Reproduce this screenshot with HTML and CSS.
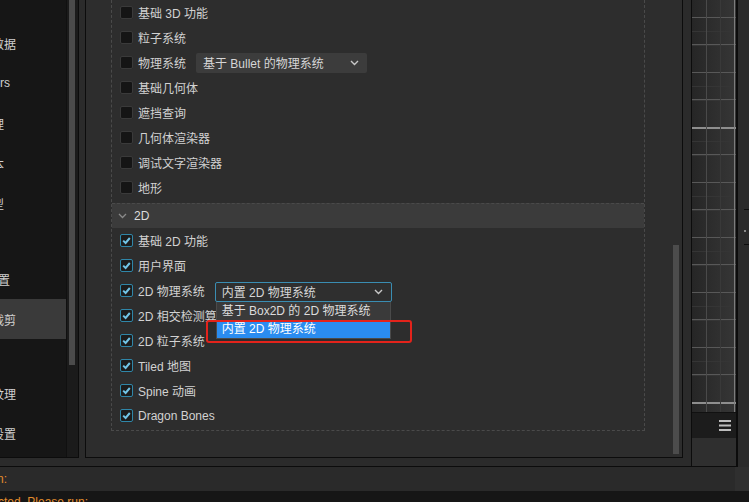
FILE: index.html
```html
<!DOCTYPE html>
<html lang="zh-CN">
<head>
  <meta charset="UTF-8" />
  <meta name="viewport" content="width=device-width, initial-scale=1.0"/>
  <title>项目设置</title>
  <link rel="stylesheet" href="styles.css">
</head>
<body>
  <div class="top">
    <div class="window">
      <div class="sidebar">
        <ul class="nav">
          <li class="nav-item"><span class="nav-label">项目数据</span></li>
          <li class="nav-item"><span class="nav-label end-10">Layers</span></li>
          <li class="nav-item"><span class="nav-label end-4">物理</span></li>
          <li class="nav-item"><span class="nav-label end-4">脚本</span></li>
          <li class="nav-item"><span class="nav-label end-4">模型</span></li>
          <li class="nav-gap"></li>
          <li class="nav-item"><span class="nav-label end-10">宏配置</span></li>
          <li class="nav-item active"><span class="nav-label">功能裁剪</span></li>
          <li class="nav-gap short"></li>
          <li class="nav-item"><span class="nav-label">压缩纹理</span></li>
          <li class="nav-item"><span class="nav-label">构建设置</span></li>
        </ul>
        <div class="nav-scroll"><div class="nav-thumb"></div></div>
      </div>

      <div class="gap"></div>

      <div class="inspector">
        <div class="inspector-body">
          <div class="tree">
            <div class="group group-3d">
              <div class="row"><span class="check"></span>基础 3D 功能</div>
              <div class="row"><span class="check"></span>粒子系统</div>
              <div class="row">
                <span class="check"></span>物理系统
                <div class="select select-3d">
                  <span>基于 Bullet 的物理系统</span>
                  <svg width="9" height="6" viewBox="0 0 9 6"><polyline points="1,1 4.5,4.5 8,1" fill="none" stroke="#c8c8c8" stroke-width="1.4"/></svg>
                </div>
              </div>
              <div class="row"><span class="check"></span>基础几何体</div>
              <div class="row"><span class="check"></span>遮挡查询</div>
              <div class="row"><span class="check"></span>几何体渲染器</div>
              <div class="row"><span class="check"></span>调试文字渲染器</div>
              <div class="row"><span class="check"></span>地形</div>
            </div>

            <div class="group-head">
              <svg width="9" height="6" viewBox="0 0 9 6"><polyline points="1,1 4.5,4.5 8,1" fill="none" stroke="#8a8a8a" stroke-width="1.3"/></svg>
              <span>2D</span>
            </div>

            <div class="group group-2d">
              <div class="row"><span class="check on"><svg width="11" height="11" viewBox="0 0 11 11"><polyline points="2.2,5.6 4.6,8 8.8,3" fill="none" stroke="#72c4e6" stroke-width="2"/></svg></span>基础 2D 功能</div>
              <div class="row"><span class="check on"><svg width="11" height="11" viewBox="0 0 11 11"><polyline points="2.2,5.6 4.6,8 8.8,3" fill="none" stroke="#72c4e6" stroke-width="2"/></svg></span>用户界面</div>
              <div class="row">
                <span class="check on"><svg width="11" height="11" viewBox="0 0 11 11"><polyline points="2.2,5.6 4.6,8 8.8,3" fill="none" stroke="#72c4e6" stroke-width="2"/></svg></span>2D 物理系统
                <div class="select select-2d">
                  <span>内置 2D 物理系统</span>
                  <svg width="9" height="6" viewBox="0 0 9 6"><polyline points="1,1 4.5,4.5 8,1" fill="none" stroke="#c8c8c8" stroke-width="1.4"/></svg>
                  <ul class="options">
                    <li>基于 Box2D 的 2D 物理系统</li>
                    <li class="selected">内置 2D 物理系统</li>
                  </ul>
                  <div class="highlight"></div>
                </div>
              </div>
              <div class="row"><span class="check on"><svg width="11" height="11" viewBox="0 0 11 11"><polyline points="2.2,5.6 4.6,8 8.8,3" fill="none" stroke="#72c4e6" stroke-width="2"/></svg></span>2D 相交检测算法</div>
              <div class="row"><span class="check on"><svg width="11" height="11" viewBox="0 0 11 11"><polyline points="2.2,5.6 4.6,8 8.8,3" fill="none" stroke="#72c4e6" stroke-width="2"/></svg></span>2D 粒子系统</div>
              <div class="row"><span class="check on"><svg width="11" height="11" viewBox="0 0 11 11"><polyline points="2.2,5.6 4.6,8 8.8,3" fill="none" stroke="#72c4e6" stroke-width="2"/></svg></span>Tiled 地图</div>
              <div class="row"><span class="check on"><svg width="11" height="11" viewBox="0 0 11 11"><polyline points="2.2,5.6 4.6,8 8.8,3" fill="none" stroke="#72c4e6" stroke-width="2"/></svg></span>Spine 动画</div>
              <div class="row"><span class="check on"><svg width="11" height="11" viewBox="0 0 11 11"><polyline points="2.2,5.6 4.6,8 8.8,3" fill="none" stroke="#72c4e6" stroke-width="2"/></svg></span>Dragon Bones</div>
            </div>
          </div>
        </div>
        <div class="v-scroll"><div class="v-thumb"></div></div>
      </div>
    </div>

    <div class="preview">
      <div class="grid"></div>
      <div class="preview-bar">
        <svg width="12" height="11" viewBox="0 0 12 11">
          <rect x="0" y="0" width="12" height="2" fill="#bdbdbd"/>
          <rect x="0" y="4.5" width="12" height="2" fill="#bdbdbd"/>
          <rect x="0" y="9" width="12" height="2" fill="#bdbdbd"/>
        </svg>
      </div>
      <div class="preview-foot"></div>
    </div>

    <div class="edge">
      <div class="edge-mark"></div>
      <div class="edge-dot"></div>
      <div class="edge-mark"></div>
    </div>
  </div>

  <div class="console-head">
    <div class="console-title"><span class="clip end-7">Migration:</span></div>
    <div class="console-edge"></div>
  </div>
  <div class="console">
    <span class="clip end-88">Old data was detected. Please run:</span>
  </div>
</body>
</html>
```

FILE: styles.css
```css
body {
  margin: 0;
  width: 749px;
  height: 502px;
  overflow: hidden;
  background: #2b2b2b;
  font-family: "Liberation Sans", "Noto Sans CJK SC", sans-serif;
  font-size: 12px;
  color: #d2d2d2;
}

ul {
  list-style: none;
  margin: 0;
  padding: 0;
}

.top {
  display: flex;
  height: 467px;
}

.window {
  width: 692px;
  box-sizing: border-box;
  display: flex;
  padding: 0 8px 8px 0;
  border-right: 1px solid #0c0c0c;
  border-bottom: 1px solid #0c0c0c;
}

/* sidebar */

.sidebar {
  width: 79px;
  box-sizing: border-box;
  display: flex;
  border-right: 1px solid #0c0c0c;
  border-bottom: 1px solid #0c0c0c;
}

.nav {
  flex: 1;
  background: #161616;
  padding-top: 23px;
  overflow: hidden;
}

.nav-item {
  height: 40px;
  display: flex;
  align-items: center;
  color: #d0d0d0;
}

.nav-item.active {
  background: #3a3a3a;
}

.nav-gap {
  height: 36px;
}

.nav-gap.short {
  height: 34px;
}

.nav-label,
.clip {
  width: 16px;
  display: flex;
  justify-content: flex-end;
  white-space: nowrap;
}

.end-10 { width: 10px; }
.end-4 { width: 4px; }
.end-7 { width: 7px; }
.end-88 { width: 88px; }

.nav-scroll {
  width: 12px;
  box-sizing: border-box;
  padding: 0 3px;
  background: #1b1b1b;
  border-left: 1px solid #101010;
}

.nav-thumb {
  width: 6px;
  height: 365px;
  margin-left: -1px;
  background: #4b4b4b;
}

.gap {
  width: 6px;
}

/* inspector */

.inspector {
  width: 598px;
  box-sizing: border-box;
  display: flex;
  background: #2d2d2d;
  border: 1px solid #0c0c0c;
  border-top: none;
}

.inspector-body {
  flex: 1;
  padding-left: 25px;
  overflow: hidden;
}

.tree {
  width: 534px;
  box-sizing: border-box;
  border: 1px dashed #4a4a4a;
  border-top: none;
}

.group-3d {
  padding-bottom: 3px;
}

.group-2d {
  padding-bottom: 2px;
}

.row {
  height: 25px;
  display: flex;
  align-items: center;
  padding-left: 8px;
  white-space: nowrap;
}

.check {
  width: 13px;
  height: 13px;
  box-sizing: border-box;
  margin-right: 5px;
  border: 1px solid #3a3a3a;
  border-radius: 2px;
  background: #151515;
  display: flex;
  align-items: center;
  justify-content: center;
}

.check.on {
  border-color: #2f86a8;
  background: #1c1c1c;
}

.group-head {
  height: 24px;
  display: flex;
  align-items: center;
  gap: 7px;
  padding-left: 6px;
  background: #3b3b3b;
  border-top: 1px dashed #4a4a4a;
  color: #dcdcdc;
}

.select {
  position: relative;
  height: 20px;
  box-sizing: border-box;
  margin-left: 10px;
  padding: 0 8px 0 7px;
  display: flex;
  align-items: center;
  justify-content: space-between;
  border-radius: 2px;
  color: #d6d6d6;
}

.select-3d {
  width: 171px;
  background: #3c3c3c;
}

.select-2d {
  width: 177px;
  background: #2f2f2f;
  border: 1px solid #3a8db2;
  padding-left: 6px;
  margin-top: 2px;
}

.options {
  position: absolute;
  top: 19px;
  left: 0;
  width: 175px;
  box-sizing: border-box;
  border: 1px solid #4a4a4a;
  border-top: none;
  background: #3a3a3a;
  z-index: 2;
}

.options li {
  height: 18px;
  line-height: 18px;
  padding-left: 5px;
  color: #dcdcdc;
}

.options li.selected {
  background: #2a8cf0;
  color: #ffffff;
}

.highlight {
  position: absolute;
  left: -10px;
  top: 37px;
  width: 206px;
  height: 23px;
  box-sizing: border-box;
  border: 2px solid #e3231b;
  border-radius: 3px;
  z-index: 3;
}

.v-scroll {
  width: 6px;
  margin-right: 3px;
  padding-bottom: 3px;
  display: flex;
  flex-direction: column;
  justify-content: flex-end;
}

.v-thumb {
  height: 209px;
  background: #4c4c4c;
}

/* scene preview */

.preview {
  width: 46px;
  box-sizing: border-box;
  display: flex;
  flex-direction: column;
  border-right: 2px solid #0c0c0c;
  border-bottom: 1px solid #0c0c0c;
}

.grid {
  height: 412px;
  background-image:
    linear-gradient(to right, transparent 42px, #7c7c7c 42px, #7c7c7c 43px, transparent 43px),
    linear-gradient(to right, transparent 14px, #4a4a4a 14px, #4a4a4a 15px, transparent 15px),
    linear-gradient(to right, transparent 28px, #393939 28px, #393939 29px, transparent 29px),
    linear-gradient(to bottom, #8e8e8e 0, #8e8e8e 2px, transparent 2px),
    linear-gradient(to bottom, #585858 0, #585858 1px, transparent 1px, transparent 27px, #585858 27px, #585858 28px, transparent 28px),
    linear-gradient(to bottom, #353535 0, #353535 1px, transparent 1px, transparent 14px, #353535 14px, #353535 15px, transparent 15px),
    linear-gradient(to right, #262626, #363636);
  background-size: 100% 100%, 100% 100%, 100% 100%, 100% 275px, 100% 55px, 100% 55px, 100% 100%;
  background-position: 0 0, 0 0, 0 0, 0 127px, 0 17px, 0 31px, 0 0;
}

.preview-bar {
  height: 25px;
  display: flex;
  align-items: center;
  justify-content: flex-end;
  padding-right: 5px;
  background: #1c1c1c;
  border-top: 1px solid #111;
}

.preview-foot {
  flex: 1;
  background: #2f2f2f;
}

.edge {
  flex: 1;
  padding-top: 209px;
}

.edge-mark {
  height: 1px;
  margin-left: 6px;
  background: #0e0e0e;
}

.edge-dot {
  width: 2px;
  height: 2px;
  margin: 20px 0 12px 6px;
  background: #8a8a8a;
}

/* console */

.console-head {
  height: 24px;
  display: flex;
}

.console-title {
  flex: 1;
  display: flex;
  align-items: center;
  background: #2a2a2a;
  color: #e38c2c;
}

.console-edge {
  width: 14px;
  background: #2f2f2f;
}

.console {
  height: 11px;
  overflow: hidden;
  background: #161616;
  color: #e38c2c;
  line-height: 16px;
  padding-top: 3px;
  box-sizing: border-box;
}
```
